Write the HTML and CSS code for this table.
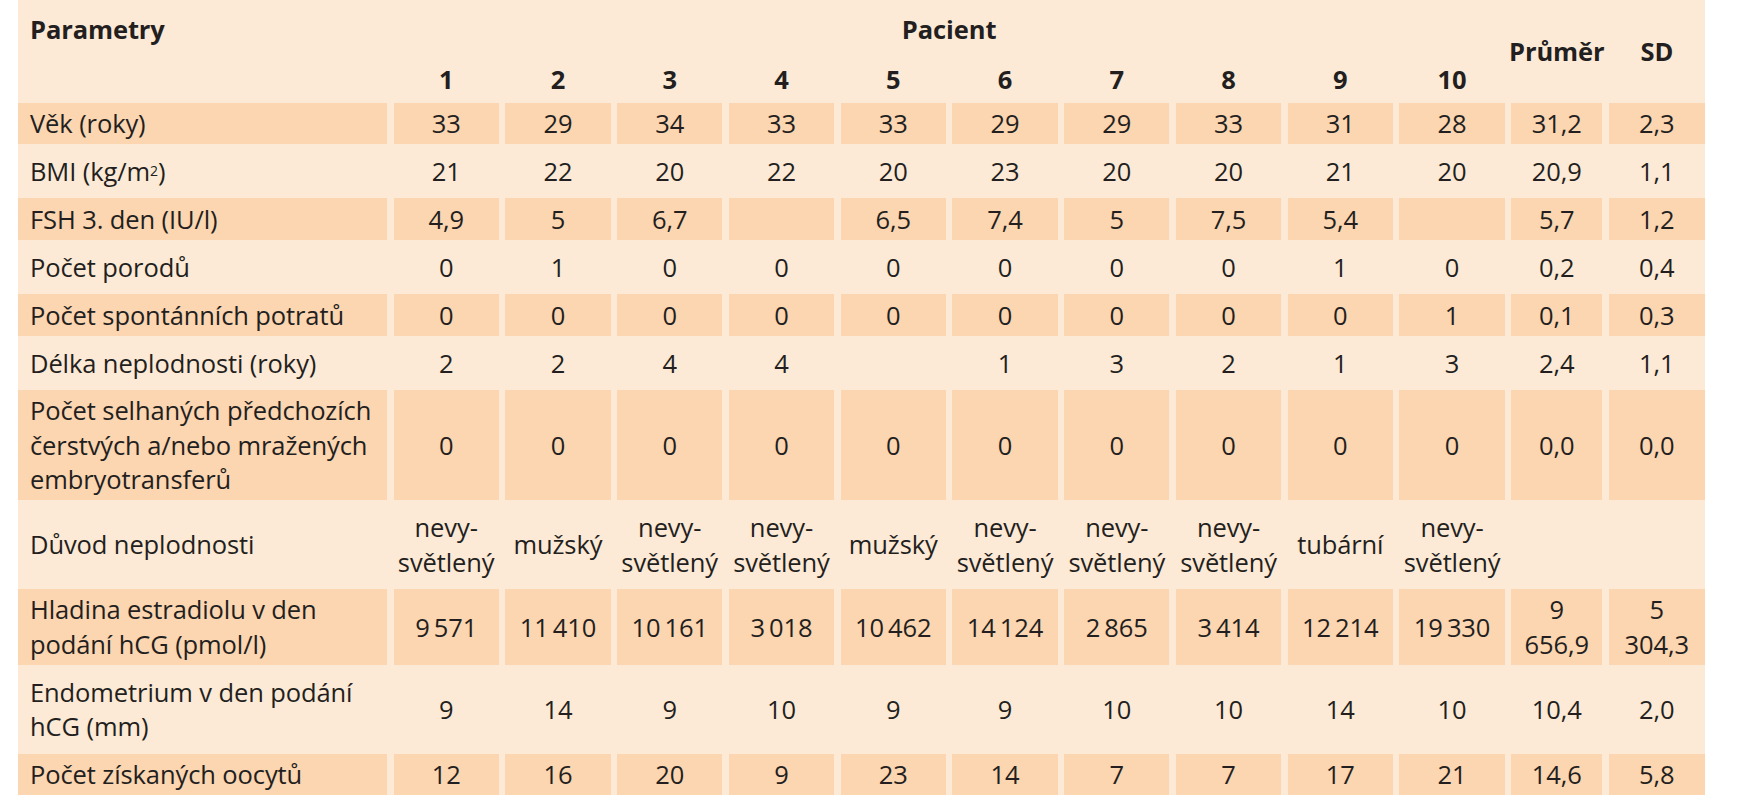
FILE: index.html
```html
<!DOCTYPE html>
<html lang="cs">
<head>
<meta charset="utf-8">
<link rel="stylesheet" href="styles.css">
</head>
<body>
<div class="tbl">
  <div class="h param">Parametry</div>
  <div class="h pacient">Pacient</div>
  <div class="h stat prumer">Průměr</div>
  <div class="h stat sd">SD</div>
  <div class="h num">1</div><div class="h num">2</div><div class="h num">3</div><div class="h num">4</div><div class="h num">5</div><div class="h num">6</div><div class="h num">7</div><div class="h num">8</div><div class="h num">9</div><div class="h num">10</div>

  <div class="row dark">
    <div class="c lab">Věk (roky)</div>
    <div class="c">33</div><div class="c">29</div><div class="c">34</div><div class="c">33</div><div class="c">33</div><div class="c">29</div><div class="c">29</div><div class="c">33</div><div class="c">31</div><div class="c">28</div><div class="c">31,2</div><div class="c">2,3</div>
  </div>
  <div class="row">
    <div class="c lab">BMI (kg/m<sup>2</sup>)</div>
    <div class="c">21</div><div class="c">22</div><div class="c">20</div><div class="c">22</div><div class="c">20</div><div class="c">23</div><div class="c">20</div><div class="c">20</div><div class="c">21</div><div class="c">20</div><div class="c">20,9</div><div class="c">1,1</div>
  </div>
  <div class="row dark">
    <div class="c lab">FSH 3. den (IU/l)</div>
    <div class="c">4,9</div><div class="c">5</div><div class="c">6,7</div><div class="c"></div><div class="c">6,5</div><div class="c">7,4</div><div class="c">5</div><div class="c">7,5</div><div class="c">5,4</div><div class="c"></div><div class="c">5,7</div><div class="c">1,2</div>
  </div>
  <div class="row">
    <div class="c lab">Počet porodů</div>
    <div class="c">0</div><div class="c">1</div><div class="c">0</div><div class="c">0</div><div class="c">0</div><div class="c">0</div><div class="c">0</div><div class="c">0</div><div class="c">1</div><div class="c">0</div><div class="c">0,2</div><div class="c">0,4</div>
  </div>
  <div class="row dark">
    <div class="c lab">Počet spontánních potratů</div>
    <div class="c">0</div><div class="c">0</div><div class="c">0</div><div class="c">0</div><div class="c">0</div><div class="c">0</div><div class="c">0</div><div class="c">0</div><div class="c">0</div><div class="c">1</div><div class="c">0,1</div><div class="c">0,3</div>
  </div>
  <div class="row">
    <div class="c lab">Délka neplodnosti (roky)</div>
    <div class="c">2</div><div class="c">2</div><div class="c">4</div><div class="c">4</div><div class="c"></div><div class="c">1</div><div class="c">3</div><div class="c">2</div><div class="c">1</div><div class="c">3</div><div class="c">2,4</div><div class="c">1,1</div>
  </div>
  <div class="row dark">
    <div class="c lab">Počet selhaných předchozích<br>čerstvých a/nebo mražených<br>embryotransferů</div>
    <div class="c">0</div><div class="c">0</div><div class="c">0</div><div class="c">0</div><div class="c">0</div><div class="c">0</div><div class="c">0</div><div class="c">0</div><div class="c">0</div><div class="c">0</div><div class="c">0,0</div><div class="c">0,0</div>
  </div>
  <div class="row">
    <div class="c lab">Důvod neplodnosti</div>
    <div class="c">nevy-<br>světlený</div><div class="c">mužský</div><div class="c">nevy-<br>světlený</div><div class="c">nevy-<br>světlený</div><div class="c">mužský</div><div class="c">nevy-<br>světlený</div><div class="c">nevy-<br>světlený</div><div class="c">nevy-<br>světlený</div><div class="c">tubární</div><div class="c">nevy-<br>světlený</div><div class="c"></div><div class="c"></div>
  </div>
  <div class="row dark">
    <div class="c lab">Hladina estradiolu v den<br>podání hCG (pmol/l)</div>
    <div class="c">9&thinsp;571</div><div class="c">11&thinsp;410</div><div class="c">10&thinsp;161</div><div class="c">3&thinsp;018</div><div class="c">10&thinsp;462</div><div class="c">14&thinsp;124</div><div class="c">2&thinsp;865</div><div class="c">3&thinsp;414</div><div class="c">12&thinsp;214</div><div class="c">19&thinsp;330</div><div class="c">9<br>656,9</div><div class="c">5<br>304,3</div>
  </div>
  <div class="row">
    <div class="c lab">Endometrium v den podání<br>hCG (mm)</div>
    <div class="c">9</div><div class="c">14</div><div class="c">9</div><div class="c">10</div><div class="c">9</div><div class="c">9</div><div class="c">10</div><div class="c">10</div><div class="c">14</div><div class="c">10</div><div class="c">10,4</div><div class="c">2,0</div>
  </div>
  <div class="row dark">
    <div class="c lab">Počet získaných oocytů</div>
    <div class="c">12</div><div class="c">16</div><div class="c">20</div><div class="c">9</div><div class="c">23</div><div class="c">14</div><div class="c">7</div><div class="c">7</div><div class="c">17</div><div class="c">21</div><div class="c">14,6</div><div class="c">5,8</div>
  </div>
</div>
</body>
</html>
```

FILE: styles.css
```css
html, body {
  margin: 0;
  padding: 0;
  background: #ffffff;
}
body {
  font-family: "Open Sans", "Lato", sans-serif;
  font-size: 25.5px;
  color: #231f20;
  letter-spacing: -0.1px;
}
.tbl {
  display: grid;
  grid-template-columns: 369px repeat(10, 105.2px) 91px 96px;
  grid-template-rows: 48px 41.5px;
  column-gap: 6.58px;
  row-gap: 6.5px;
  width: 1687px;
  margin-left: 18px;
  background: #fdead6;
}
.row {
  display: contents;
}
.h {
  font-weight: 700;
  line-height: 34px;
}
.param {
  grid-column: 1;
  grid-row: 1 / 3;
  padding: 12px 0 0 12px;
}
.pacient {
  grid-column: 2 / 12;
  grid-row: 1;
  text-align: center;
  padding-top: 12px;
}
.stat {
  grid-row: 1 / 3;
  display: flex;
  align-items: center;
  justify-content: center;
  padding-top: 6px;
}
.prumer { grid-column: 12; }
.sd { grid-column: 13; }
.num {
  grid-row: 2;
  text-align: center;
  padding-top: 7px;
}
.c {
  display: flex;
  align-items: center;
  justify-content: center;
  text-align: center;
  padding: 3.5px 0;
  line-height: 34.4px;
  white-space: nowrap;
}
.c.lab {
  justify-content: flex-start;
  text-align: left;
  padding-left: 12px;
}
.dark > .c {
  background: #fcd5b1;
}
sup {
  font-size: 0.55em;
  line-height: 0;
  vertical-align: 0.75em;
}
```
